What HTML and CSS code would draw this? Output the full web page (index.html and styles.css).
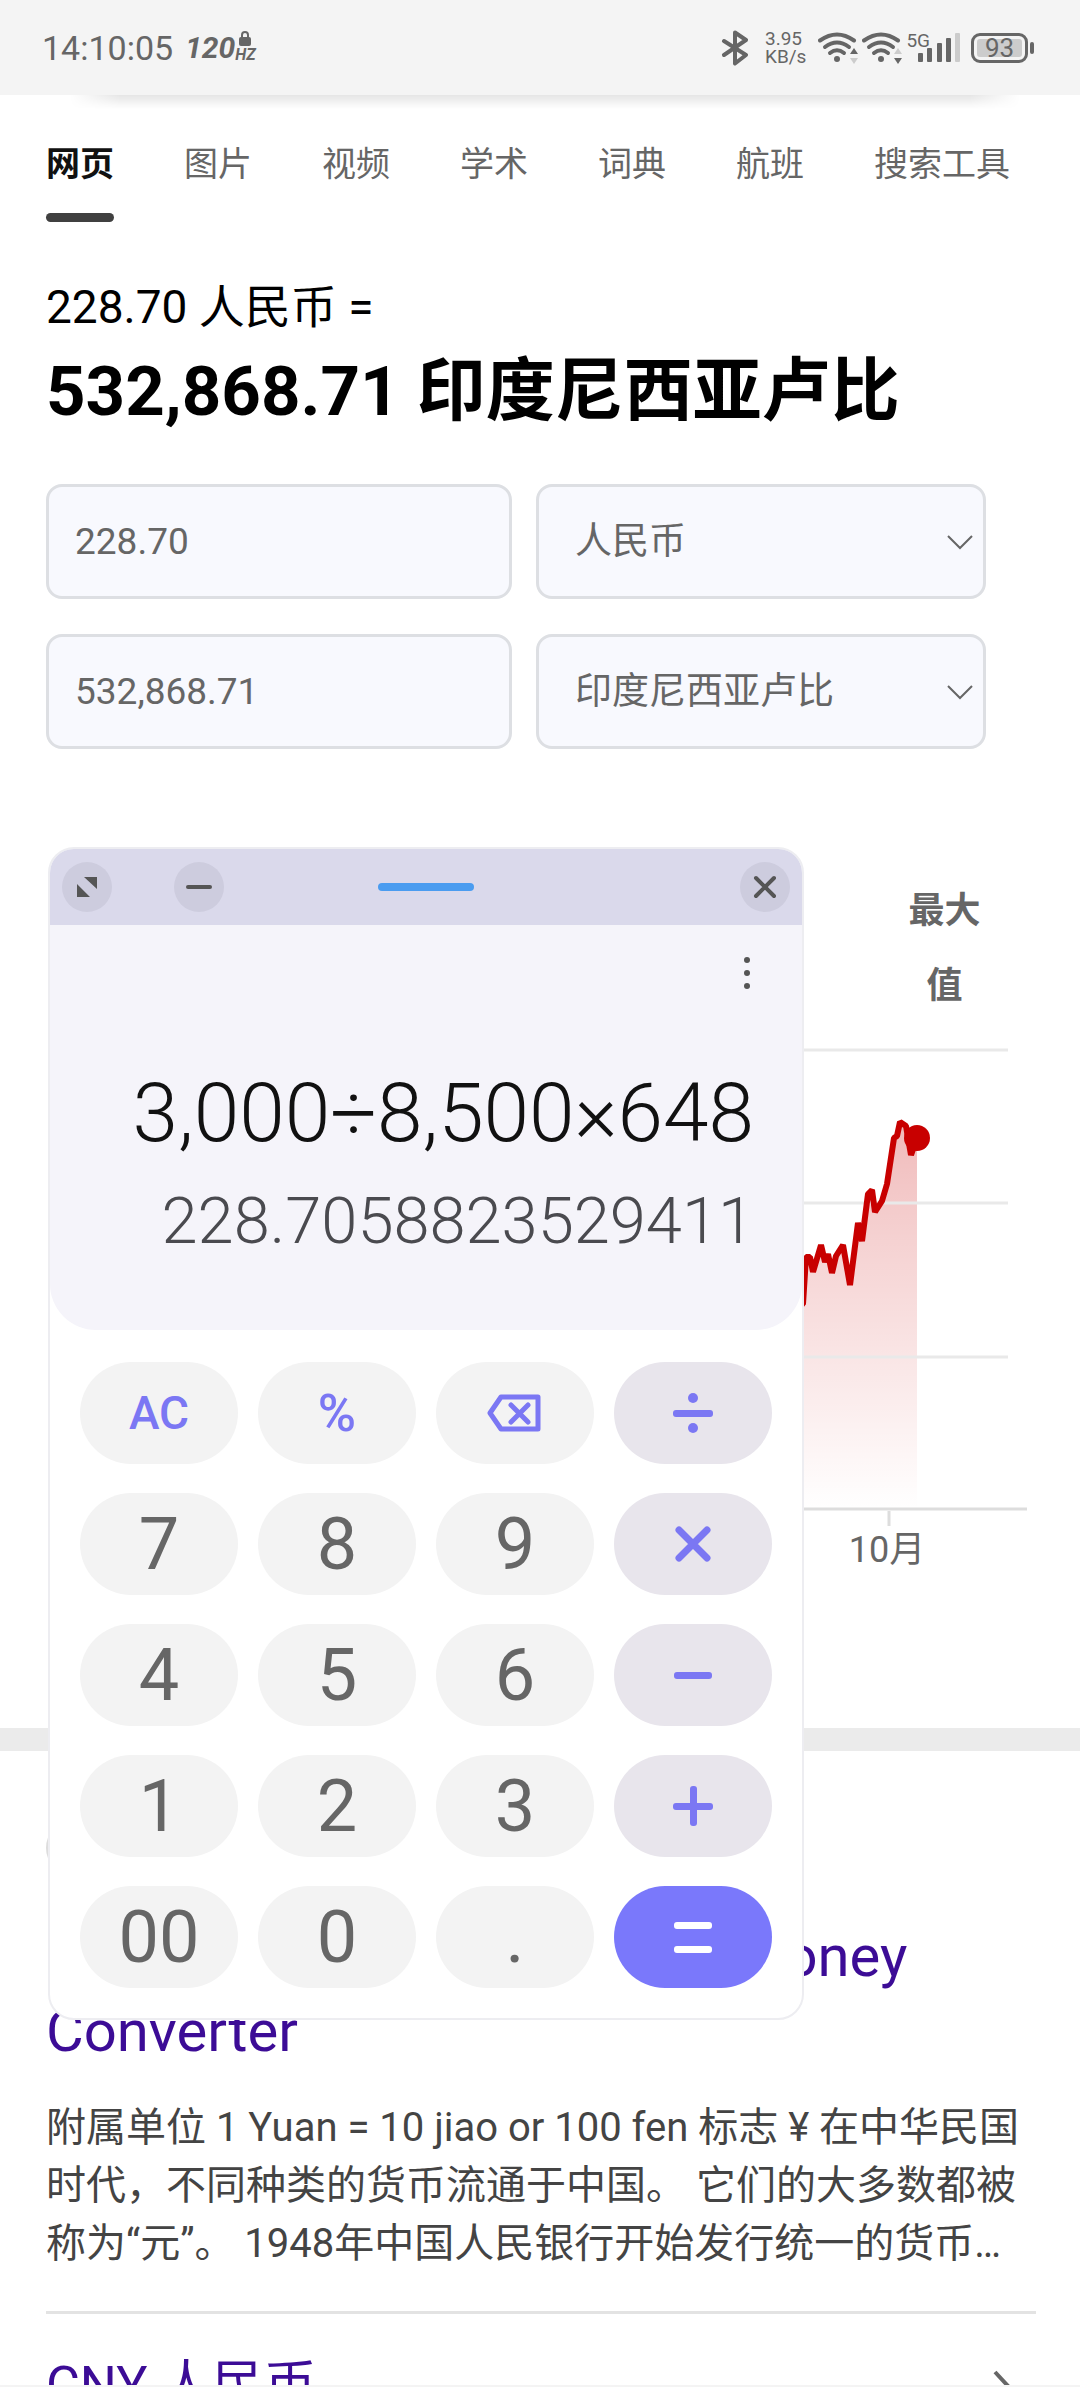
FILE: index.html
```html
<!DOCTYPE html>
<html lang="zh-CN">
  <head>
    <meta charset="UTF-8" />
    <meta name="viewport" content="width=device-width, initial-scale=1.0" />
    <title>人民币 - 印度尼西亚卢比</title>
    <link rel="stylesheet" href="styles.css">
  </head>
  <body>
    <header class="status-bar">
      <div class="status-left">
        <span class="time">14:10:05</span>
        <span class="rate">120</span>
        <span class="rate-unit">
          <svg width="12" height="15" viewBox="0 0 12 15">
            <path d="M3 7V4a3 3 0 0 1 6 0v3" fill="none" stroke="#666" stroke-width="2" />
            <rect x="0" y="6" width="12" height="9" rx="2" fill="#666" />
          </svg>
          <span>HZ</span>
        </span>
      </div>
      <div class="status-right">
        <svg class="bluetooth" width="28" height="36" viewBox="0 0 28 36">
          <path d="M3 11l22 14-11 8.500V2.500L25 10 3 25" fill="none" stroke="#666" stroke-width="4" stroke-linecap="round" stroke-linejoin="round" />
        </svg>
        <div class="speed"><span>3.95</span><span>KB/s</span></div>
        <svg class="wifi" width="44" height="34" viewBox="0 0 44 34">
          <g fill="none" stroke="#666" stroke-width="4" stroke-linecap="round">
            <path d="M2 9.500q17-12 34 0" />
            <path d="M7 16q12-9 24 0" />
            <path d="M12 22q7-5.500 14 0" />
          </g>
          <circle cx="19" cy="28" r="3" fill="#666" />
          <path d="M32 23l4-6 4 6z" fill="#666" />
          <path d="M32 27l4 6 4-6z" fill="#ccc" />
        </svg>
        <svg class="wifi" width="44" height="34" viewBox="0 0 44 34">
          <g fill="none" stroke="#666" stroke-width="4" stroke-linecap="round">
            <path d="M2 9.500q17-12 34 0" />
            <path d="M7 16q12-9 24 0" />
            <path d="M12 22q7-5.500 14 0" />
          </g>
          <circle cx="19" cy="28" r="3" fill="#666" />
          <path d="M32 23l4-6 4 6z" fill="#ccc" />
          <path d="M32 27l4 6 4-6z" fill="#666" />
        </svg>
        <div class="signal">
          <span>5G</span>
          <svg width="43" height="29" viewBox="0 0 43 29">
            <g fill="#666">
              <rect x="0" y="20" width="5" height="9" rx="1" />
              <rect x="9" y="15" width="5" height="14" rx="1" />
              <rect x="19" y="10" width="5" height="19" rx="1" />
              <rect x="28" y="5" width="5" height="24" rx="1" />
            </g>
            <rect x="37" y="0" width="5" height="29" rx="1" fill="#ccc" />
          </svg>
        </div>
        <div class="battery"><span>93</span></div>
      </div>
    </header>

    <nav class="tabs">
      <a href="#" class="active">网页</a>
      <a href="#">图片</a>
      <a href="#">视频</a>
      <a href="#">学术</a>
      <a href="#">词典</a>
      <a href="#">航班</a>
      <a href="#">搜索工具</a>
    </nav>

    <main>
      <section class="converter">
        <p class="from">228.70 人民币 =</p>
        <h1>532,868.71 印度尼西亚卢比</h1>
        <form class="fields">
          <input type="text" value="228.70" aria-label="人民币金额" />
          <select aria-label="原货币"><option>人民币</option></select>
          <input type="text" value="532,868.71" aria-label="印度尼西亚卢比金额" />
          <select aria-label="目标货币"><option>印度尼西亚卢比</option></select>
        </form>

        <div class="ranges"><button type="button">最大值</button></div>
        <svg class="chart" viewBox="0 0 988 540">
          <defs>
            <linearGradient id="fade" x1="0" y1="0" x2="0" y2="1">
              <stop offset="0" stop-color="#c80000" stop-opacity="0.27" />
              <stop offset="0.3" stop-color="#c80000" stop-opacity="0.18" />
              <stop offset="1" stop-color="#c80000" stop-opacity="0" />
            </linearGradient>
          </defs>
          <path fill="url(#fade)" d="M600 469V300L700 280L758 263L761 217L764 218L767 231L775 205L779 222L782 214L786 234L790 214L797 205L804 245L812 183L815 201L822 154L827 150L829 172L836 161L841 144L848 98L851 96L854 82L860 86L866 115L871 98V469Z" />
          <path stroke="#e9e9e9" stroke-width="3" d="M8 10H962M8 163H962M8 317H962" />
          <path stroke="#ddd" stroke-width="3" d="M8 469H981M843 471V486" />
          <path fill="none" stroke="#c80000" stroke-width="6" stroke-linejoin="bevel" d="M600 300L700 280L757 264L760 217L764 217L767 232L775 205L779 222L782 214L786 233L790 216L797 205L804 245L812 183L816 201L822 154L826 150L829 172L836 161L841 144L848 98L851 96L854 82L860 86L865 115L871 98" />
          <circle cx="871" cy="98" r="13" fill="#c80000" />
          <text x="841" y="522" text-anchor="middle">10月</text>
        </svg>
      </section>

      <section class="result">
        <div class="favicon"></div>
        <h2><a href="#">Chinese Yuan Renminbi to Money Converter</a></h2>
        <p>附属单位 1 Yuan = 10 jiao or 100 fen 标志 ¥ 在中华民国时代，不同种类的货币流通于中国。 它们的大多数都被称为“元”。 1948年中国人民银行开始发行统一的货币…</p>
      </section>

      <a href="#" class="related">
        <span>CNY 人民币</span>
        <svg width="20" height="32" viewBox="0 0 20 32">
          <path d="M3 2l13 14L3 30" fill="none" stroke="#666" stroke-width="4" />
        </svg>
      </a>
    </main>

    <!-- floating calculator window -->
    <div class="calculator">
      <div class="title-bar">
        <button type="button" aria-label="全屏">
          <svg width="22" height="22" viewBox="0 0 22 22" fill="#555">
            <path d="M8 1h13v12zM1 8v13h13z" />
          </svg>
        </button>
        <button type="button" class="minimize" aria-label="最小化">
          <svg width="26" height="22" viewBox="0 0 26 22">
            <path d="M2 11h22" stroke="#555" stroke-width="4" stroke-linecap="round" />
          </svg>
        </button>
        <button type="button" class="close" aria-label="关闭">
          <svg width="24" height="24" viewBox="0 0 24 24">
            <path d="M3 3l18 18M21 3L3 21" stroke="#555" stroke-width="4" stroke-linecap="round" />
          </svg>
        </button>
        <span class="handle"></span>
      </div>
      <div class="display">
        <button type="button" class="more" aria-label="更多">
          <svg width="12" height="34" viewBox="0 0 12 34" fill="#555">
            <circle cx="5" cy="4" r="3" />
            <circle cx="5" cy="17" r="3" />
            <circle cx="5" cy="30" r="3" />
          </svg>
        </button>
        <div class="expression">3,000÷8,500×648</div>
        <div class="answer">228.7058823529411</div>
      </div>
      <div class="keys">
        <button type="button" class="clear">AC</button>
        <button type="button" class="percent">%</button>
        <button type="button" aria-label="退格">
          <svg width="56" height="40" viewBox="0 0 56 40" fill="none" stroke="#7b77f3" stroke-width="5" stroke-linejoin="round" stroke-linecap="round">
            <path d="M14 4h37v32H14L3 20z" />
            <path d="M24 12l17 17M41 12L24 29" />
          </svg>
        </button>
        <button type="button" class="op" aria-label="除">
          <svg width="42" height="42" viewBox="0 0 42 42" fill="#7b77f3">
            <rect x="1" y="18" width="40" height="7" rx="3" />
            <circle cx="21" cy="6" r="5" />
            <circle cx="21" cy="36" r="5" />
          </svg>
        </button>
        <button type="button">7</button>
        <button type="button">8</button>
        <button type="button">9</button>
        <button type="button" class="op" aria-label="乘">
          <svg width="42" height="42" viewBox="0 0 42 42">
            <path d="M7 7l28 28M35 7L7 35" stroke="#7b77f3" stroke-width="7" stroke-linecap="round" />
          </svg>
        </button>
        <button type="button">4</button>
        <button type="button">5</button>
        <button type="button">6</button>
        <button type="button" class="op" aria-label="减">
          <svg width="42" height="42" viewBox="0 0 42 42" fill="#7b77f3">
            <rect x="2" y="18" width="38" height="7" rx="3" />
          </svg>
        </button>
        <button type="button">1</button>
        <button type="button">2</button>
        <button type="button">3</button>
        <button type="button" class="op" aria-label="加">
          <svg width="42" height="42" viewBox="0 0 42 42" fill="#7b77f3">
            <rect x="1" y="18" width="40" height="7" rx="3" />
            <rect x="18" y="1" width="7" height="40" rx="3" />
          </svg>
        </button>
        <button type="button">00</button>
        <button type="button">0</button>
        <button type="button">.</button>
        <button type="button" class="equals" aria-label="等于">
          <svg width="42" height="42" viewBox="0 0 42 42" fill="#fff">
            <rect x="2" y="6" width="38" height="7" rx="3" />
            <rect x="2" y="30" width="38" height="7" rx="3" />
          </svg>
        </button>
      </div>
    </div>
  </body>
</html>
```

FILE: styles.css
```css
* {
  margin: 0;
  padding: 0;
  box-sizing: border-box;
}

body {
  position: relative;
  height: 100vh;
  overflow: hidden;
  background-color: #fff;
  border-bottom: 2px solid #f4f4f4;
  font-family: Roboto, "Noto Sans CJK SC", sans-serif;
  color: #666;
}

a {
  text-decoration: none;
}

button {
  border: none;
  font-family: inherit;
  color: inherit;
}

svg {
  display: block;
}

/* Status bar */
.status-bar {
  position: relative;
  display: flex;
  justify-content: space-between;
  align-items: center;
  height: 95px;
  padding: 0 46px 0 42px;
  background-color: #f4f4f4;
}

/* bottom shadow of the search box scrolled under the bar */
.status-bar::after {
  content: "";
  position: absolute;
  left: 70px;
  right: 60px;
  top: 100%;
  height: 14px;
  background: linear-gradient(rgba(0, 0, 0, 0.1), transparent);
  mask-image: linear-gradient(90deg, transparent, #000 50px, #000 calc(100% - 50px), transparent);
}

.status-left,
.status-right {
  display: flex;
  align-items: center;
}

.time {
  font-size: 34px;
  line-height: 40px;
}

.rate {
  margin-left: 12px;
  font-size: 30px;
  font-weight: 700;
  font-style: italic;
  line-height: 40px;
}

.rate-unit {
  display: flex;
  flex-direction: column;
  align-items: center;
  font-size: 16px;
  font-weight: 700;
  font-style: italic;
  line-height: 18px;
}

.speed {
  display: flex;
  flex-direction: column;
  margin: 0 12px 0 16px;
  font-size: 19px;
  line-height: 18px;
}

.signal {
  display: flex;
  align-items: flex-end;
  margin-right: 10px;
}

.signal span {
  align-self: flex-start;
  margin-right: -12px;
  font-size: 19px;
  line-height: 16px;
}

.battery {
  position: relative;
  width: 57px;
  height: 30px;
  margin-right: 6px;
  padding: 3px;
  border: 3px solid #666;
  border-radius: 9px;
}

.battery span {
  display: block;
  border-radius: 3px;
  background-color: #ccc;
  font-size: 26px;
  line-height: 18px;
  text-align: center;
}

.battery::after {
  content: "";
  position: absolute;
  right: -9px;
  top: 6px;
  width: 4px;
  height: 12px;
  border-radius: 2px;
  background-color: #666;
}

/* Search tabs */
.tabs {
  display: flex;
  gap: 70px;
  height: 127px;
  padding: 45px 46px 0;
  white-space: nowrap;
}

.tabs a {
  font-size: 34px;
  line-height: 48px;
  color: #666;
}

.tabs .active {
  font-weight: 700;
  color: #111;
}

.tabs .active::after {
  content: "";
  display: block;
  height: 9px;
  margin-top: 25px;
  border-radius: 5px;
  background-color: #404040;
}

/* Converter */
.converter {
  padding: 55px 46px 148px;
  border-bottom: 23px solid #ebebeb;
}

.from {
  font-size: 46px;
  line-height: 60px;
  color: #000;
}

h1 {
  margin-top: 15px;
  font-size: 69px;
  line-height: 80px;
  color: #000;
}

.fields {
  display: grid;
  grid-template-columns: 466fr 450fr;
  gap: 35px 24px;
  margin: 52px 48px 0 0;
}

.fields input,
.fields select {
  width: 100%;
  height: 115px;
  padding: 0 26px;
  border: 3px solid #dddfe3;
  border-radius: 16px;
  background-color: #f8f9fe;
  font-family: inherit;
  font-size: 37px;
  color: #666;
}

.fields select {
  appearance: none;
  padding: 0 36px;
  background-image: url("data:image/svg+xml,%3Csvg xmlns='http://www.w3.org/2000/svg' width='26' height='16'%3E%3Cpath d='M1 2l12 12L25 2' fill='none' stroke='%23666' stroke-width='2'/%3E%3C/svg%3E");
  background-repeat: no-repeat;
  background-position: right 10px center;
}

.ranges {
  display: flex;
  justify-content: flex-end;
  margin: 125px 53px 16px 0;
}

.ranges button {
  width: 73px;
  background: none;
  font-size: 36px;
  font-weight: 700;
  line-height: 75px;
}

.chart {
  width: 100%;
}

.chart text {
  font-size: 36px;
  fill: #666;
}

/* Search result */
.result {
  margin: 0 44px 0 46px;
  padding: 71px 0 38px;
  border-bottom: 3px solid #e3e3e3;
}

.favicon {
  width: 52px;
  height: 52px;
  border: 2px solid #ddd;
  border-radius: 50%;
}

h2 {
  margin: 45px 0 30px;
  font-size: 58px;
  font-weight: 400;
  line-height: 75px;
}

h2 a,
.related {
  color: #3c0c96;
}

.result p {
  font-size: 40px;
  line-height: 58px;
  color: #444;
}

.related {
  display: flex;
  justify-content: space-between;
  align-items: center;
  margin: 37px 68px 0 46px;
  font-size: 52px;
  line-height: 70px;
}

/* Calculator */
.calculator {
  position: absolute;
  left: 48px;
  top: 847px;
  width: 70%;
  overflow: hidden;
  border: 2px solid #ededf1;
  border-radius: 26px;
  background-color: #fff;
}

.title-bar {
  position: relative;
  display: flex;
  align-items: center;
  height: 76px;
  padding: 0 12px;
  background-color: #dad9eb;
}

.title-bar button {
  display: flex;
  justify-content: center;
  align-items: center;
  width: 50px;
  height: 50px;
  border-radius: 50%;
  background-color: #cdccde;
}

.title-bar .minimize {
  margin-left: 62px;
}

.title-bar .close {
  margin-left: auto;
}

.handle {
  position: absolute;
  left: 50%;
  top: 50%;
  width: 96px;
  height: 8px;
  border-radius: 4px;
  background-color: #4a9cf0;
  transform: translate(-50%, -50%);
}

.display {
  display: flex;
  flex-direction: column;
  align-items: flex-end;
  height: 405px;
  padding: 31px 48px 0 0;
  border-radius: 0 0 46px 46px;
  background-color: #f5f4fa;
}

.more {
  background: none;
}

.expression {
  margin-top: 75px;
  font-size: 82px;
  font-weight: 300;
  line-height: 96px;
  color: #111;
}

.answer {
  margin-top: 20px;
  font-size: 65px;
  font-weight: 300;
  line-height: 80px;
  color: #4a4a4f;
}

.keys {
  display: grid;
  grid-template-columns: repeat(4, 1fr);
  gap: 29px 20px;
  padding: 32px 30px 30px;
}

.keys button {
  display: flex;
  justify-content: center;
  align-items: center;
  height: 102px;
  border-radius: 51px;
  background-color: #f3f3f3;
  font-size: 72px;
  font-weight: 400;
}

.keys .clear,
.keys .percent {
  font-size: 46px;
  font-weight: 500;
  color: #7b77f3;
}

.keys .percent {
  font-size: 52px;
}

.keys .op {
  background-color: #e8e5ec;
}

.keys .equals {
  background-color: #7a78fb;
}
```
